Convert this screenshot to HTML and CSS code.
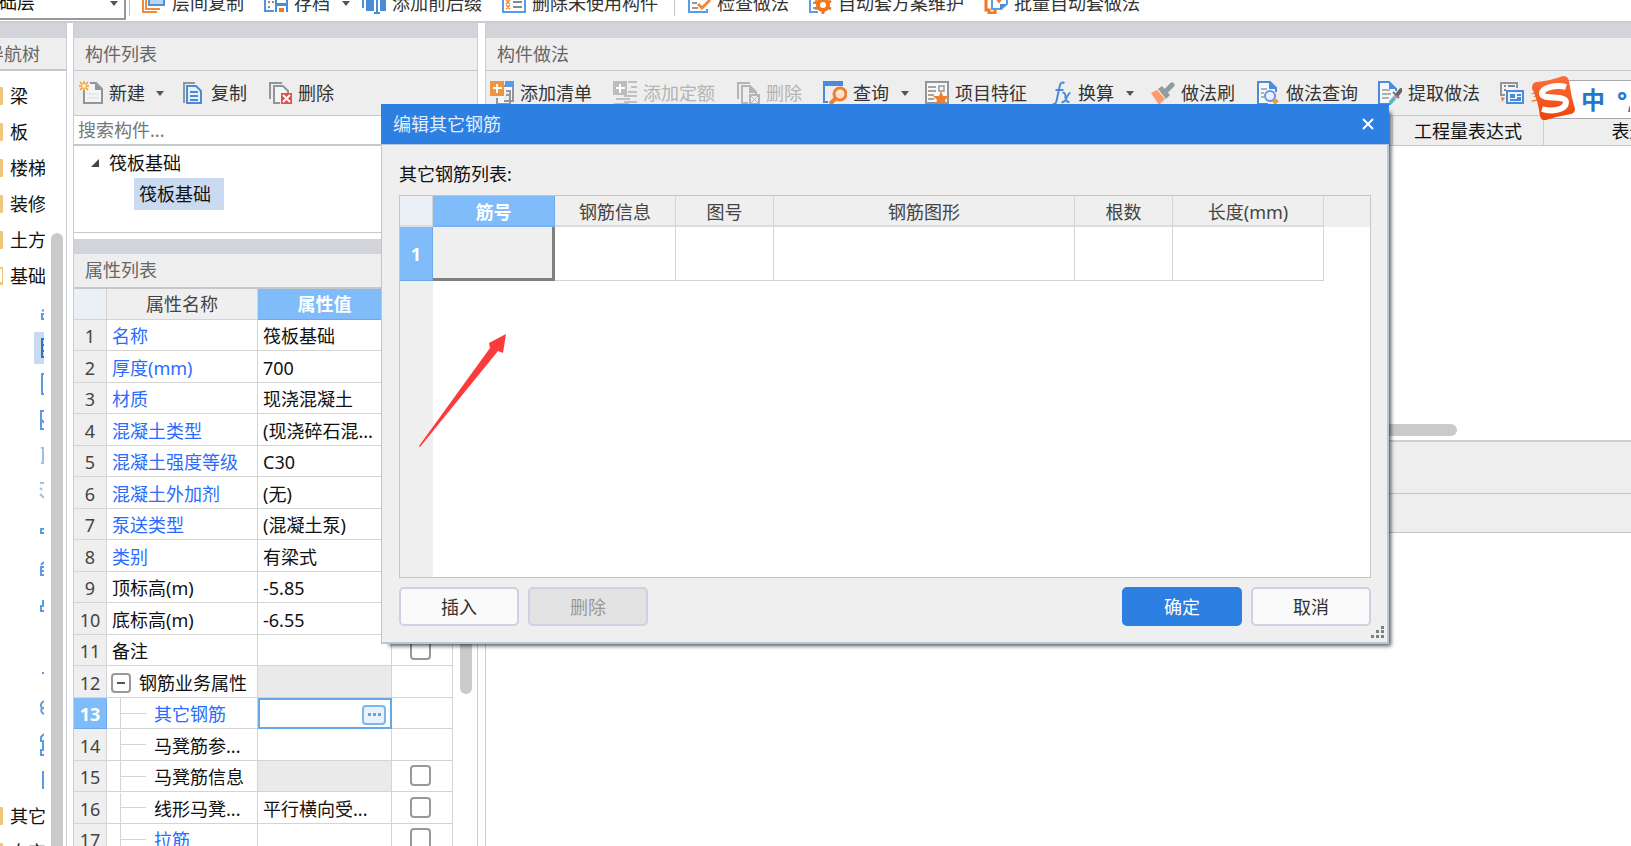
FILE: index.html
```
<!DOCTYPE html>
<html lang="zh-CN">
<head>
<meta charset="utf-8">
<title>编辑其它钢筋</title>
<link rel="stylesheet" href="styles.css">
</head>
<body>
<header class="ribbon">
  <div class="floor">
    <select class="floor-select" aria-label="楼层"><option>基础层</option></select>
    <svg class="floor-arrow" width="10" height="6" viewBox="0 0 10 6"><path d="M1 0h8L5 5z" fill="#555"/></svg>
  </div>
  <span class="divider"></span>
  <button class="tool r1"><svg class="icon" viewBox="0 0 24 24"><path d="M1 2v20h14M4 2v17h14" fill="none" stroke="#f08a3c" stroke-width="2"/><rect x="7" y="1" width="15" height="14" fill="#b9d7fb" stroke="#4f93dc" stroke-width="2"/></svg>层间复制</button>
  <button class="tool r2"><svg class="icon" viewBox="0 0 24 24"><path d="M10 21H1V2h9" fill="none" stroke="#4f93dc" stroke-width="2"/><path d="M4 6h2v2H4zM8 6h2v2H8zM4 11h2v2H4zM4 16h2v2H4zM8 11h2v2H8z" fill="#888"/><rect x="11" y="7" width="13" height="15" fill="#4a8cd8"/><rect x="13" y="7" width="9" height="6" fill="#fff"/><rect x="13" y="16" width="9" height="6" fill="#fff"/><rect x="15" y="18" width="5" height="4" fill="#f07820"/></svg>存档<svg class="caret" viewBox="0 0 8 5"><path d="M0 0h8L4 5z"/></svg></button>
  <button class="tool r3"><svg class="icon" viewBox="0 0 24 24"><path d="M1 18V3h6" fill="none" stroke="#4f93dc" stroke-width="2"/><rect x="4" y="10" width="8" height="11" fill="#4a8cd8"/><rect x="18" y="10" width="6" height="11" fill="#4a8cd8"/><path d="M12 4h6M15 4v19M12 23h6" stroke="#4a8cd8" stroke-width="2"/></svg>添加前后缀</button>
  <button class="tool r4"><svg class="icon" viewBox="0 0 24 24"><rect x="1" y="1" width="22" height="21" fill="#fff" stroke="#5b9ce6" stroke-width="2"/><path d="M4 5l4 4m0-4l-4 4m0 1l4 4m0-4l-4 4m0 1l4 4m0-4l-4 4" stroke="#f08a3c" stroke-width="1.500"/><path d="M11 7h9M11 12h9M11 17h9" stroke="#888" stroke-width="2"/></svg>删除未使用构件</button>
  <span class="divider"></span>
  <button class="tool r5"><svg class="icon" viewBox="0 0 24 24"><path d="M20 10V2H2v20h18v-3" fill="none" stroke="#5b9ce6" stroke-width="2"/><path d="M5 8h10M5 13h5M5 18h6" stroke="#999" stroke-width="2"/><path d="M11 14l4 4 8-8" fill="none" stroke="#f08a3c" stroke-width="3"/></svg>检查做法</button>
  <button class="tool r6"><svg class="icon" viewBox="0 0 24 24"><path d="M18 6V2H2v20h8" fill="none" stroke="#5b9ce6" stroke-width="2"/><path d="M5 8h7M5 13h4M5 18h3" stroke="#999" stroke-width="2"/><circle cx="15" cy="15" r="5" fill="none" stroke="#f07820" stroke-width="4"/><path d="M15 6v4M15 20v4M7 11l4 2M19 17l4 2M23 11l-4 2M11 17l-4 2" stroke="#f07820" stroke-width="3"/></svg>自动套方案维护</button>
  <button class="tool r7"><svg class="icon" viewBox="0 0 24 24"><path d="M2 2v18h3v3h6v-7" fill="none" stroke="#f07820" stroke-width="3"/><path d="M8 1v18h9l6-5V1" fill="#fff" stroke="#5b9ce6" stroke-width="2"/><path d="M16 20v-6h7z" fill="#4a8cd8"/><path d="M13 8l2 3 4-5" stroke="#f07820" stroke-width="3" fill="none"/></svg>批量自动套做法</button>
</header>

<main class="workspace">
  <nav class="nav">
    <div class="band"></div>
    <h2 class="head nav-head">导航树</h2>
    <div class="nav-body">
      <ul class="nav-list">
        <li><i class="folder"></i>梁</li>
        <li><i class="folder"></i>板</li>
        <li><i class="folder"></i>楼梯</li>
        <li><i class="folder"></i>装修</li>
        <li><i class="folder"></i>土方</li>
        <li><i class="folder open"></i>基础</li>
        <li class="sub"><svg viewBox="0 0 10 24"><path d="M10 10L8 11M10 14H8v5h2" /></svg></li>
        <li class="sub on"><svg viewBox="0 0 10 24"><path d="M10 3H8v18h2M8 9h2M8 15h2"/></svg></li>
        <li class="sub"><svg viewBox="0 0 10 24"><path d="M10 2H8v20h2"/></svg></li>
        <li class="sub"><svg viewBox="0 0 10 24"><path d="M10 3H7v18h3M8 12l2 3"/></svg></li>
        <li class="sub pale"><svg viewBox="0 0 10 24"><path d="M7 4h3M9 4v15M7 19h3"/></svg></li>
        <li class="sub pale"><svg viewBox="0 0 10 24"><path d="M6 3h4M6 8l2 2M6 14l4 4"/></svg></li>
        <li class="sub"><svg viewBox="0 0 10 24"><path d="M10 13H7v4h3"/></svg></li>
        <li class="sub"><svg viewBox="0 0 10 24"><path d="M10 10l-3 3M10 15H7v8h3M7 19h3"/></svg></li>
        <li class="sub"><svg viewBox="0 0 10 24"><path d="M9 12v5M10 18H7v5h3"/></svg></li>
        <li class="sub"></li>
        <li class="sub"><svg viewBox="0 0 10 24"><path d="M9 12v2"/></svg></li>
        <li class="sub"><svg viewBox="0 0 10 24"><path d="M10 5Q5 8 8 12Q6 16 10 18M8 12h2"/></svg></li>
        <li class="sub"><svg viewBox="0 0 10 24"><path d="M10 2L7 5v4h3M9 9v9M10 18H7v5h3"/></svg></li>
        <li class="sub"><svg viewBox="0 0 10 24"><path d="M9 3v18"/></svg></li>
        <li><i class="folder"></i>其它</li>
        <li><i class="folder"></i>自定义</li>
      </ul>
      <div class="nav-track"><div class="nav-thumb"></div></div>
    </div>
  </nav>

  <section class="middle">
    <div class="band"></div>
    <h2 class="head">构件列表</h2>
    <div class="toolbar">
      <button class="tool m1"><svg class="icon" viewBox="0 0 24 24"><path d="M5 9v13h18V8l-6-6H11" fill="#f4f4f4" stroke="#8f979d" stroke-width="2"/><path d="M16 2v7h7z" fill="#8f979d"/><path d="M8 13h12M8 17h12" stroke="#ddd"/><path d="M5 0v10M0 5h10M1 1l8 8M9 1l-8 8" stroke="#f59a23" stroke-width="1.500"/><circle cx="5" cy="5" r="2" fill="#fff3c0"/></svg>新建<svg class="caret" viewBox="0 0 8 5"><path d="M0 0h8L4 5z"/></svg></button>
      <button class="tool m2"><svg class="icon" viewBox="0 0 24 24"><path d="M3 22V2h11" fill="none" stroke="#8f979d" stroke-width="2"/><path d="M6 5h9l5 5v12H6z" fill="#e6f0fc" stroke="#4a8cd8" stroke-width="2"/><path d="M9 11h8M9 15h8M9 19h8" stroke="#4a8cd8" stroke-width="2"/></svg>复制</button>
      <button class="tool m3"><svg class="icon" viewBox="0 0 24 24"><path d="M2 18V2h12" fill="none" stroke="#8f979d" stroke-width="2"/><path d="M12 22H6V5h9l5 5v2" fill="#f4f4f4" stroke="#8f979d" stroke-width="2"/><rect x="13" y="12" width="11" height="11" fill="#d9534f"/><path d="M15 14l7 7m0-7l-7 7" stroke="#fff" stroke-width="2"/></svg>删除</button>
    </div>
    <input class="search" type="text" placeholder="搜索构件..." aria-label="搜索构件">
    <div class="tree">
      <div class="tree-row"><svg class="tree-arrow" viewBox="0 0 10 10"><path d="M9 1v8H1z" fill="#444"/></svg>筏板基础</div>
      <div class="tree-row leaf"><span class="tree-sel">筏板基础</span></div>
    </div>
    <div class="band second"></div>
    <h2 class="head strong">属性列表</h2>
    <div class="props-wrap">
      <table class="props">
        <colgroup><col class="c-no"><col class="c-name"><col class="c-val"><col class="c-chk"></colgroup>
        <thead><tr><th class="corner"></th><th>属性名称</th><th class="sel">属性值</th><th>附加</th></tr></thead>
        <tbody>
          <tr><th>1</th><td class="blue">名称</td><td>筏板基础</td><td></td></tr>
          <tr><th>2</th><td class="blue">厚度(mm)</td><td>700</td><td></td></tr>
          <tr><th>3</th><td class="blue">材质</td><td>现浇混凝土</td><td></td></tr>
          <tr><th>4</th><td class="blue">混凝土类型</td><td>(现浇碎石混...</td><td></td></tr>
          <tr><th>5</th><td class="blue">混凝土强度等级</td><td>C30</td><td></td></tr>
          <tr><th>6</th><td class="blue">混凝土外加剂</td><td>(无)</td><td></td></tr>
          <tr><th>7</th><td class="blue">泵送类型</td><td>(混凝土泵)</td><td></td></tr>
          <tr><th>8</th><td class="blue">类别</td><td>有梁式</td><td></td></tr>
          <tr><th>9</th><td>顶标高(m)</td><td>-5.85</td><td></td></tr>
          <tr><th>10</th><td>底标高(m)</td><td>-6.55</td><td></td></tr>
          <tr><th>11</th><td>备注</td><td></td><td class="chk"><input type="checkbox" aria-label="备注"></td></tr>
          <tr><th>12</th><td class="node"><div class="group"><button class="fold" aria-label="折叠"></button>钢筋业务属性</div></td><td class="off"></td><td></td></tr>
          <tr><th class="sel">13</th><td class="node blue"><div class="child">其它钢筋</div></td><td class="editing"><button class="more" aria-label="更多"><i></i><i></i><i></i></button></td><td></td></tr>
          <tr><th>14</th><td class="node"><div class="child">马凳筋参...</div></td><td></td><td></td></tr>
          <tr><th>15</th><td class="node"><div class="child">马凳筋信息</div></td><td class="off"></td><td class="chk"><input type="checkbox" aria-label="马凳筋信息"></td></tr>
          <tr><th>16</th><td class="node"><div class="child">线形马凳...</div></td><td>平行横向受...</td><td class="chk"><input type="checkbox" aria-label="线形马凳筋"></td></tr>
          <tr><th>17</th><td class="node blue"><div class="child">拉筋</div></td><td></td><td class="chk"><input type="checkbox" aria-label="拉筋"></td></tr>
        </tbody>
      </table>
      <div class="props-track"><div class="props-thumb"></div></div>
    </div>
  </section>

  <section class="right">
    <div class="band"></div>
    <h2 class="head">构件做法</h2>
    <div class="toolbar">
      <button class="tool t1"><svg class="icon" viewBox="0 0 24 24"><path d="M7 17v6h13V9M10 5h13v15h-9" fill="#f8f8f8" stroke="#8f979d" stroke-width="2"/><rect x="15" y="0" width="9" height="6" fill="#5b9ce6"/><path d="M16 10h5M16 14h5" stroke="#999" stroke-width="2"/><rect width="14" height="15" fill="#ee9443"/><path d="M7 3v9M3 7h9" stroke="#fff" stroke-width="2"/></svg>添加清单</button>
      <button class="tool t2" disabled><svg class="icon" viewBox="0 0 24 24"><rect width="14" height="14" fill="#bcbcbc"/><path d="M7 3v9M3 7h9" stroke="#fff" stroke-width="2"/><path d="M15 1h9M18 6h6M15 11h9M11 15h13M3 18h14M11 21h13M1 23h15" stroke="#c0c0c0" stroke-width="2"/></svg>添加定额</button>
      <button class="tool t3" disabled><svg class="icon" viewBox="0 0 24 24"><path d="M2 18V2h12" fill="none" stroke="#b5b5b5" stroke-width="2"/><path d="M12 22H6V5h8l6 6v2" fill="none" stroke="#b5b5b5" stroke-width="2"/><path d="M13 4v8h8z" fill="#b5b5b5"/><rect x="14" y="14" width="9" height="9" fill="#eee" stroke="#b5b5b5" stroke-width="2"/><path d="M15 15l7 7m0-7l-7 7" stroke="#b5b5b5"/></svg>删除</button>
      <button class="tool t4"><svg class="icon" viewBox="0 0 24 24"><rect width="20" height="5" fill="#4a8cd8"/><path d="M1 4v17h4" fill="none" stroke="#4a8cd8" stroke-width="2"/><circle cx="17" cy="13" r="6" fill="#fbe3cf" stroke="#f07f2e" stroke-width="3"/><path d="M12 18l-5 5" stroke="#f07f2e" stroke-width="4"/></svg>查询<svg class="caret" viewBox="0 0 8 5"><path d="M0 0h8L4 5z"/></svg></button>
      <button class="tool t5"><svg class="icon" viewBox="0 0 24 24"><rect x="1" y="1" width="22" height="21" fill="#f8f8f8" stroke="#8f979d" stroke-width="2"/><path d="M3 6h8M3 10h8M3 14h6M3 18h6" stroke="#888" stroke-width="1.500"/><rect x="14" y="5" width="5" height="5" fill="none" stroke="#999" stroke-width="1.500"/><path d="M16 10l2 5h6l-4 4 1 5-5-3-5 3 1-5-4-4h6z" fill="#f07f2e"/></svg>项目特征</button>
      <button class="tool t6"><svg class="icon fx" viewBox="0 0 19 24"><path d="M12 2Q8 0 7 6L4 20Q3 24 0 23M3 9h8M10 12q3-1 3 4t4 5M18 12q-2 0-4 5t-5 4" fill="none" stroke="#4a8cd8" stroke-width="2"/></svg>换算<svg class="caret" viewBox="0 0 8 5"><path d="M0 0h8L4 5z"/></svg></button>
      <button class="tool t7"><svg class="icon" viewBox="0 0 24 24"><path d="M0 12l6-3 8 9-6 6z" fill="#ff9b70"/><path d="M7 8l4-3 8 9-4 4z" fill="#8f9ca0"/><path d="M15 10l6-6" stroke="#8f9ca0" stroke-width="5" stroke-linecap="round"/></svg>做法刷</button>
      <button class="tool t8"><svg class="icon" viewBox="0 0 24 24"><path d="M12 23H2V1h12l6 6v4" fill="#f4f8fd" stroke="#4a8cd8" stroke-width="2"/><path d="M13 1v7h7z" fill="#4a8cd8"/><path d="M5 8h6M5 12h3M5 16h3" stroke="#999" stroke-width="1.500"/><circle cx="14" cy="15" r="5" fill="#eaf0ff" stroke="#6c93dd" stroke-width="2"/><path d="M18 19l3 3" stroke="#f59a23" stroke-width="5"/></svg>做法查询</button>
      <button class="tool t9"><svg class="icon" viewBox="0 0 24 24"><path d="M13 23H1V1h10l7 7v2" fill="#f4f8fd" stroke="#4a8cd8" stroke-width="2"/><path d="M11 1v7h8z" fill="#4a8cd8"/><path d="M4 9h8M4 13h9M4 17h7" stroke="#999" stroke-width="1.500"/><path d="M23 9l-4 5" stroke="#666" stroke-width="4" stroke-linecap="round"/><path d="M15 11l6 6" stroke="#777" stroke-width="2"/><path d="M18 15l-6 7" stroke="#aaa" stroke-width="4"/><path d="M16 18l-4 4" stroke="#36c0d0" stroke-width="3"/></svg>提取做法</button>
      <button class="tool t10"><svg class="icon" viewBox="0 0 24 24"><path d="M5 14H1V2h16v5" fill="#f4f4f4" stroke="#8f979d" stroke-width="2"/><path d="M4 5h2M8 5h7M4 9h2" stroke="#888" stroke-width="2"/><rect x="7" y="10" width="16" height="12" fill="#eaf3fe" stroke="#4a8cd8" stroke-width="2"/><path d="M10 13h5v4h-5z" fill="#4a8cd8"/><path d="M17 14h4M17 17h4M10 19h11" stroke="#4a8cd8" stroke-width="2"/><path d="M1 16l4 1-3 4z" fill="#f07f2e"/></svg>多</button>
    </div>
    <div class="grid-head"><span></span><span class="expr">工程量表达式</span><span class="desc">表达式说明</span></div>
    <div class="grid-body"><div class="h-thumb"></div></div>
    <div class="strip tall"></div>
    <div class="strip"></div>
  </section>
</main>

<aside class="ime">
  <svg class="ime-logo" viewBox="0 0 44 44"><defs><linearGradient id="ime-fill" x1="0" y1="0" x2="0" y2="1"><stop offset="0" stop-color="#fb6f3c"/><stop offset="1" stop-color="#ee4408"/></linearGradient></defs><path d="M4 6Q18 5 31 0Q36 0 37 5Q39 20 43 33Q43 37 39 38Q27 40 14 44Q9 45 8 40Q6 24 0 12Q0 7 4 6z" fill="url(#ime-fill)"/><path d="M34 11C24 8 9 12 10 18C11 24 34 19 34 26C34 34 20 36 10 33" fill="none" stroke="#fff" stroke-width="6"/></svg>
  <span class="ime-mode">中</span><span class="ime-punct">°,</span>
</aside>

<div class="dialog" role="dialog" aria-labelledby="dlg-title">
  <div class="dlg-title"><h1 id="dlg-title">编辑其它钢筋</h1><button class="close" aria-label="关闭"><svg viewBox="0 0 12 12"><path d="M1 1l10 10M11 1L1 11" stroke="#fff" stroke-width="2"/></svg></button></div>
  <div class="dlg-body">
    <p class="dlg-label" id="dlg-list">其它钢筋列表:</p>
    <div class="frame">
      <table class="bars" aria-labelledby="dlg-list">
        <colgroup><col class="b0"><col class="b1"><col class="b2"><col class="b3"><col class="b4"><col class="b5"><col class="b6"><col></colgroup>
        <thead><tr><th class="corner"></th><th class="sel">筋号</th><th>钢筋信息</th><th>图号</th><th>钢筋图形</th><th>根数</th><th>长度(mm)</th><th class="rest"></th></tr></thead>
        <tbody><tr><th class="sel">1</th><td class="current"></td><td></td><td></td><td></td><td></td><td></td><td class="rest"></td></tr></tbody>
      </table>
      <div class="gutter"></div>
    </div>
    <div class="actions">
      <button class="btn">插入</button>
      <button class="btn" disabled>删除</button>
      <span class="spring"></span>
      <button class="btn primary">确定</button>
      <button class="btn">取消</button>
    </div>
  </div>
  <svg class="grip" viewBox="0 0 14 14"><path d="M10 1h3v3h-3zM5 5h3v3H5zM10 5h3v3h-3zM0 10h3v3H0zM5 10h3v3H5zM10 10h3v3h-3z" fill="#7a7f8a"/></svg>
</div>
<svg class="pointer" viewBox="0 0 88 114"><path d="M0 112L71 14L70 9L87 0L84 19L79 17L1 113z" fill="#fb3b3b"/></svg>
</body>
</html>
```
FILE: styles.css
```
* { box-sizing: border-box; }
body {
  margin: 0; height: 100vh; overflow: hidden; display: flex; flex-direction: column;
  background: #fff; color: #111; position: relative;
  font: 18px/24px "Noto Sans", "Noto Sans CJK SC", sans-serif;
}
button, input, select { font: inherit; color: inherit; }
h1, h2, p, ul { margin: 0; padding: 0; font-size: 18px; font-weight: 400; }
button { border: 0; background: none; padding: 0; margin: 0; }

.tool { display: flex; align-items: center; flex: none; gap: 6px; color: #333; white-space: nowrap; }
.tool:disabled { color: #b4b4b4; }
.icon { width: 24px; height: 24px; flex: none; }
.caret { width: 8px; height: 5px; margin-left: 6px; fill: #555; }

/* ribbon, scrolled so that only its lower part shows */
.ribbon { height: 23px; flex: none; display: flex; align-items: flex-end; overflow: hidden; border-bottom: 2px solid #cbccd1; }
.ribbon .tool { margin-bottom: 5px; }
.ribbon .icon { margin-bottom: 2px; align-self: flex-end; }
.floor { position: relative; width: 126px; display: flex; justify-content: flex-end; overflow: hidden; margin-bottom: 1px; flex: none; }
.floor-select { flex: none; width: 145px; height: 34px; appearance: none; border: 1px solid #999; border-width: 0 2px 2px 0; background: #fff; padding: 0; }
.floor-arrow { position: absolute; right: 7px; bottom: 13px; }
.divider { width: 1px; height: 16px; background: #c4c4c4; margin: 0 0 5px 3px; flex: none; }
.r1 { margin-left: 12px; }
.r2, .r4, .r7 { margin-left: 20px; }
.r3 { margin-left: 12px; }
.ribbon .divider:nth-of-type(2) { margin-left: 16px; }
.r5 { margin-left: 12px; }
.r6 { margin-left: 19px; }

.workspace { flex: 1; min-height: 0; display: flex; }
.band { height: 15px; background: #d3d4d9; flex: none; }
.head { height: 33px; flex: none; background: #eee; color: #666; padding: 4px 11px; border-bottom: 1px solid #c5c9cf; white-space: nowrap; }
.toolbar { height: 45px; flex: none; display: flex; align-items: center; background: #eee; border-bottom: 1px solid #c5c9cf; overflow: hidden; }

.nav { width: 67px; flex: none; border-right: 1px solid #c9ced6; display: flex; flex-direction: column; overflow: hidden; }
.nav-head { display: flex; justify-content: flex-end; padding: 4px 26px 4px 0; border-bottom: 2px solid #c5c9cf; }
.nav-body { flex: 1; min-height: 0; display: flex; overflow: hidden; }
.nav-list { list-style: none; width: 45px; padding-top: 7px; overflow: hidden; }
.nav-list li { height: 36px; display: flex; align-items: center; gap: 7px; white-space: nowrap; }
.folder { width: 3px; height: 18px; background: #efc67c; flex: none; }
.folder.open { background: #fff; border: 1px solid #efc67c; border-width: 2px 1px 3px 0; }
.nav-list .sub { padding-left: 34px; }
.sub svg { width: 10px; height: 24px; fill: none; stroke: #5b9be0; stroke-width: 2; }
.sub.on svg { background: #c9daf1; height: 32px; stroke: #2f74c4; }
.sub.pale svg { stroke: #9fc0e6; }
.nav-track { flex: none; width: 12px; margin: 162px 0 0 6px; }
.nav-thumb { height: 100%; background: #cacaca; border-radius: 6px 6px 0 0; }

.middle { width: 405px; margin-left: 6px; flex: none; border: 1px solid #c9ced6; border-width: 0 1px; display: flex; flex-direction: column; }
.m1 { margin-left: 5px; }
.m1 .caret { margin-left: 5px; }
.m2 { margin-left: 17px; }
.m3 { margin-left: 21px; }
.m3 .icon { margin-left: 0; }
.search { height: 30px; flex: none; border: 0; border-bottom: 2px solid #c4c8ca; padding: 0 4px; outline: 0; background: #fff; }
.search::placeholder { color: #777; opacity: 1; }
.tree { height: 87px; flex: none; border-bottom: 1px solid #c5c9cf; }
.tree-row { height: 31px; display: flex; align-items: center; gap: 9px; padding: 2px 0 0 16px; }
.tree-arrow { width: 10px; height: 10px; }
.leaf { padding-left: 60px; }
.tree-sel { background: #c9daf1; padding: 4px 13px 4px 5px; }
.second { margin-top: 6px; }
.strong { border-bottom: 2px solid #c5c7ca; height: 35px; }
.props-wrap { flex: 1; min-height: 0; display: flex; overflow: hidden; }
table { border-collapse: separate; border-spacing: 0; table-layout: fixed; }
th { font-weight: 400; color: #444; background: #efefef; padding: 0; }
th, td { border: 1px solid #d4d4d4; border-width: 0 1px 1px 0; white-space: nowrap; overflow: hidden; }
th.corner { background: #ebf0f6; }
th.sel { background: #80bbfa; color: #fff; font-weight: 700; border-color: #6ba9ec; }
.props { width: 379px; height: 1px; flex: none; }
.c-no { width: 33px; }
.c-name { width: 151px; }
.c-val { width: 134px; }
.c-chk { width: 61px; }
.props thead th { height: 31px; }
.props tbody th { padding-top: 2px; }
.props tbody tr { height: 31px; }
.props tbody tr:nth-child(even) { height: 32px; }
.props td { padding: 2px 5px 0; line-height: 24px; }
.props .blue { color: #2a6cff; }
.props .off { background: #eaeaea; }
.props .node { padding: 0; }
.group, .child { height: 30px; display: flex; align-items: center; padding-top: 2px; }
.group { padding-left: 4px; gap: 8px; }
.fold { width: 20px; height: 20px; border: 2px solid #999; border-radius: 4px; background: #fff; display: grid; place-items: center; }
.fold::before { content: ""; width: 8px; height: 2px; background: #555; }
.child { margin-left: 13px; border-left: 1px solid #d4d4d4; padding-left: 33px; background: linear-gradient(#d4d4d4, #d4d4d4) 0 50% / 25px 1px no-repeat; }
.props .editing { border: 2px solid #66a7e8; text-align: right; padding: 0 4px 2px; }
.more { display: inline-flex; gap: 2px; align-items: center; justify-content: center; width: 24px; height: 20px; border: 2px solid #7cb6ee; border-radius: 4px; background: #e9f1fa; vertical-align: middle; }
.more i { width: 3px; height: 3px; background: #62a3e4; }
.props .chk { text-align: center; padding: 0 4px 2px 0; line-height: 20px; }
.chk input { appearance: none; width: 21px; height: 21px; border: 2px solid #999; border-radius: 4px; margin: 0; background: #fff; vertical-align: middle; }
.props-track { width: 12px; margin-left: 7px; }
.props-thumb { height: 405px; background: #cacaca; border-radius: 6px; }

.right { flex: 1; min-width: 0; margin-left: 7px; border-left: 1px solid #c9ced6; display: flex; flex-direction: column; overflow: hidden; }
.t1 { margin-left: 4px; }
.t2, .t3, .t4 { margin-left: 21px; }
.t5 { margin-left: 16px; }
.t6 { margin-left: 25px; }
.t6 .fx { width: 20px; }
.t7 { margin-left: 17px; }
.t8 { margin-left: 21px; }
.t9, .t10 { margin-left: 20px; }
.t4 .caret, .t6 .caret { margin-left: 6px; }
.t10 { color: #e58a4a; }
.grid-head { height: 30px; flex: none; display: flex; background: #eee; border-bottom: 1px solid #c5c9cf; }
.grid-head span { border-right: 1px solid #c9ced6; text-align: center; line-height: 30px; white-space: nowrap; flex: none; }
.grid-head span:first-child { width: 907px; }
.grid-head .expr { width: 151px; }
.grid-head .desc { width: 226px; }
.grid-body { height: 296px; flex: none; display: flex; align-items: flex-end; border-bottom: 2px solid #ccd0d3; }
.h-thumb { width: 971px; height: 12px; margin-bottom: 4px; background: #cacaca; border-radius: 6px; }
.strip { height: 39px; flex: none; background: #eee; border-bottom: 1px solid #bfc5ca; }
.strip.tall { height: 52px; }

.ime { position: absolute; left: 1532px; right: 0; top: 80px; height: 39px; display: flex; align-items: center; background: linear-gradient(#fff, #fff) 20px 0 no-repeat; border: 1px solid #aaa; border-width: 1px 0; border-image: linear-gradient(90deg, transparent 20px, #aaa 20px) 1; color: #2277c8; font-weight: 700; white-space: nowrap; }
.ime-logo { width: 44px; height: 44px; margin-top: -4px; flex: none; }
.ime-mode { margin-left: 5px; font-size: 24px; }
.ime-punct { margin-left: 12px; width: 13px; overflow: hidden; font-size: 24px; }

.dialog { position: absolute; left: 381px; top: 104px; width: 1008px; background: #efefef; box-shadow: 5px 5px 4px -3px rgba(0, 0, 0, .65); display: flex; flex-direction: column; }
.dlg-title { height: 40px; display: flex; align-items: center; justify-content: space-between; background: #2d7fe1; color: #e3eefb; padding: 0 15px 0 12px; }
.dlg-title svg { width: 12px; height: 12px; display: block; }
.dlg-body { border: 1px solid #b9c5d8; border-width: 1px 2px 2px 1px; padding: 17px 16px 16px 17px; }
.dlg-label { margin-bottom: 9px; }
.frame { border: 1px solid #c6c6c6; background: #fff; height: 383px; display: flex; flex-direction: column; }
.bars { width: 100%; flex: none; }
.b0 { width: 33px; }
.b1 { width: 122px; }
.b2 { width: 121px; }
.b3 { width: 98px; }
.b4 { width: 301px; }
.b5 { width: 98px; }
.b6 { width: 151px; }
.bars thead th { height: 31px; padding-top: 2px; border-bottom: 2px solid #dcdcdc; }
.bars thead .sel { border-bottom-color: #78b2f2; }
.bars tbody tr { height: 54px; }
.bars .rest { border-right: 0; border-bottom: 0; }
.bars .current { background: #efefef; border: 3px solid #808080; border-width: 0 3px 3px 0; }
.gutter { flex: 1; width: 33px; background: #efefef; }
.actions { display: flex; gap: 9px; margin-top: 9px; }
.spring { flex: 1; }
.btn { width: 120px; height: 39px; border: 2px solid #ccd2e2; border-radius: 5px; background: #fafafa; color: #333; }
.btn:disabled { background: #e3e3e3; color: #999; }
.btn.primary { background: #2d7fe1; border-color: #2d7fe1; color: #fff; }
.grip { position: absolute; right: 4px; bottom: 5px; width: 14px; height: 14px; }
.pointer { position: absolute; left: 419px; top: 334px; width: 88px; height: 114px; }
```
